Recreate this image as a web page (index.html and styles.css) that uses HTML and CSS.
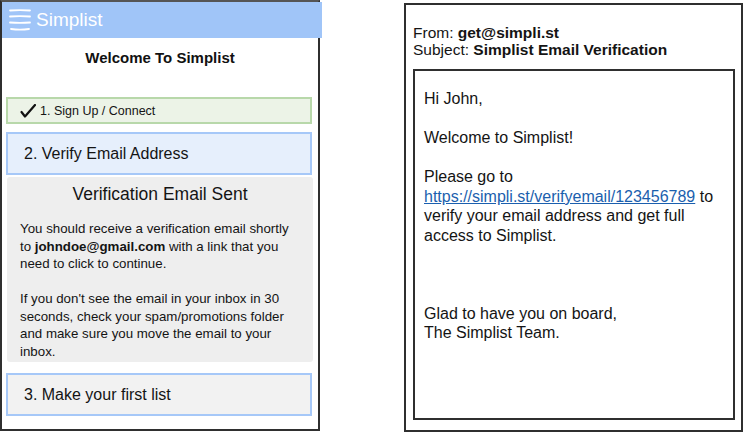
FILE: index.html
```html
<!DOCTYPE html>
<html>
<head>
<meta charset="utf-8">
<link rel="stylesheet" href="styles.css">
</head>
<body>
<div class="phone">
  <header class="appbar">
    <svg class="menu" width="22" height="22" viewBox="0 0 22 22">
      <path d="M1 1.5 Q11 0.6 21 1.5"/>
      <path d="M1 7.5 Q11 6.8 21 7.5"/>
      <path d="M1 13.5 Q11 14.4 21 13.5"/>
      <path d="M2 20 Q11 21.4 20 20"/>
    </svg>
    <span class="brand">Simplist</span>
  </header>
  <h1 class="title">Welcome To Simplist</h1>
  <div class="step done">
    <svg class="check" width="16" height="14" viewBox="0 0 16 14"><path d="M1.5 8 L5 12.5 L15 1"/></svg>
    <span>1. Sign Up / Connect</span>
  </div>
  <div class="step active">2. Verify Email Address</div>
  <div class="panel">
    <h2 class="panel-title">Verification Email Sent</h2>
    <p class="panel-text">You should receive a verification email shortly<br>to <b>johndoe@gmail.com</b> with a link that you<br>need to click to continue.</p>
    <p class="panel-text">If you don't see the email in your inbox in 30<br>seconds, check your spam/promotions folder<br>and make sure you move the email to your<br>inbox.</p>
  </div>
  <div class="step next">3. Make your first list</div>
</div>

<div class="email">
  <div class="meta">From: <b>get@simpli.st</b></div>
  <div class="meta">Subject: <b>Simplist Email Verification</b></div>
  <div class="message">
    <p>Hi John,</p>
    <p>Welcome to Simplist!</p>
    <p>Please go to<br><a href="#">https://simpli.st/verifyemail/123456789</a> to<br>verify your email address and get full<br>access to Simplist.</p>
    <p class="sign">Glad to have you on board,<br>The Simplist Team.</p>
  </div>
</div>
</body>
</html>
```
FILE: styles.css
```css
* { box-sizing: border-box; }
html, body { margin: 0; padding: 0; background: #fff; }
body {
  display: flex;
  align-items: flex-start;
  font-family: "Liberation Sans", Arial, sans-serif;
  color: #141414;
  width: 745px;
  height: 434px;
  overflow: hidden;
}

.phone {
  width: 320px;
  height: 431px;
  border: 2px solid #2f2f2f;
  border-top: 2px solid #555;
  display: flex;
  flex-direction: column;
}

.appbar {
  height: 36px;
  background: #a0c5f8;
  display: flex;
  align-items: center;
  padding-left: 7px;
  gap: 5px;
  margin-right: -4px;
}
.menu path {
  fill: none;
  stroke: #fff;
  stroke-width: 1.8;
  stroke-linecap: round;
}
.brand {
  color: #fff;
  font-size: 19px;
  line-height: 22px;
}

.title {
  margin: 10px 0 0;
  text-align: center;
  font-size: 15px;
  line-height: 20px;
  font-weight: bold;
  color: #111;
}

.step {
  margin-left: 4px;
  width: 306px;
  border: 2px solid;
  display: flex;
  align-items: center;
}
.step.done {
  margin-top: 29px;
  height: 27px;
  background: #ecf3e7;
  border-color: #b8d8aa;
  padding-left: 12px;
  font-size: 12.5px;
  gap: 4px;
}
.check path {
  fill: none;
  stroke: #111;
  stroke-width: 2.2;
  stroke-linecap: round;
  stroke-linejoin: round;
}
.step.active {
  margin-top: 8px;
  height: 43px;
  background: #e6effc;
  border-color: #a6c8f8;
  padding-left: 16px;
  font-size: 16px;
}
.step.next {
  margin-top: 11px;
  height: 43px;
  background: #f2f2f2;
  border-color: #a6c8f8;
  padding-left: 16px;
  font-size: 16px;
}

.panel {
  margin: 2px 0 0 5px;
  width: 306px;
  background: #eeeeee;
  border-radius: 3px;
  padding: 6px 0 2px 13px;
}
.panel-title {
  margin: 0 0 15px -13px;
  text-align: center;
  font-size: 17.5px;
  line-height: 22px;
  font-weight: normal;
}
.panel-text {
  margin: 0 0 17.5px;
  font-size: 13.3px;
  line-height: 17.5px;
}
.panel-text:last-child { margin-bottom: 0; }

.email {
  margin: 3px 0 0 84px;
  width: 339px;
  height: 429px;
  border: 2px solid #2f2f2f;
  padding: 19px 6px 10px 7px;
  display: flex;
  flex-direction: column;
}
.meta {
  font-size: 15.5px;
  line-height: 16.5px;
}
.meta:first-child { margin-top: 1px; }
.message {
  margin-top: 11px;
  flex: 1;
  border: 2px solid #2f2f2f;
  padding: 18px 9px;
  font-size: 16px;
  line-height: 19.5px;
}
.message p { margin: 0 0 19.5px; }
.message p.sign { margin-top: 58.5px; }
.message a {
  color: #1b5fae;
  text-decoration: underline;
}
```
